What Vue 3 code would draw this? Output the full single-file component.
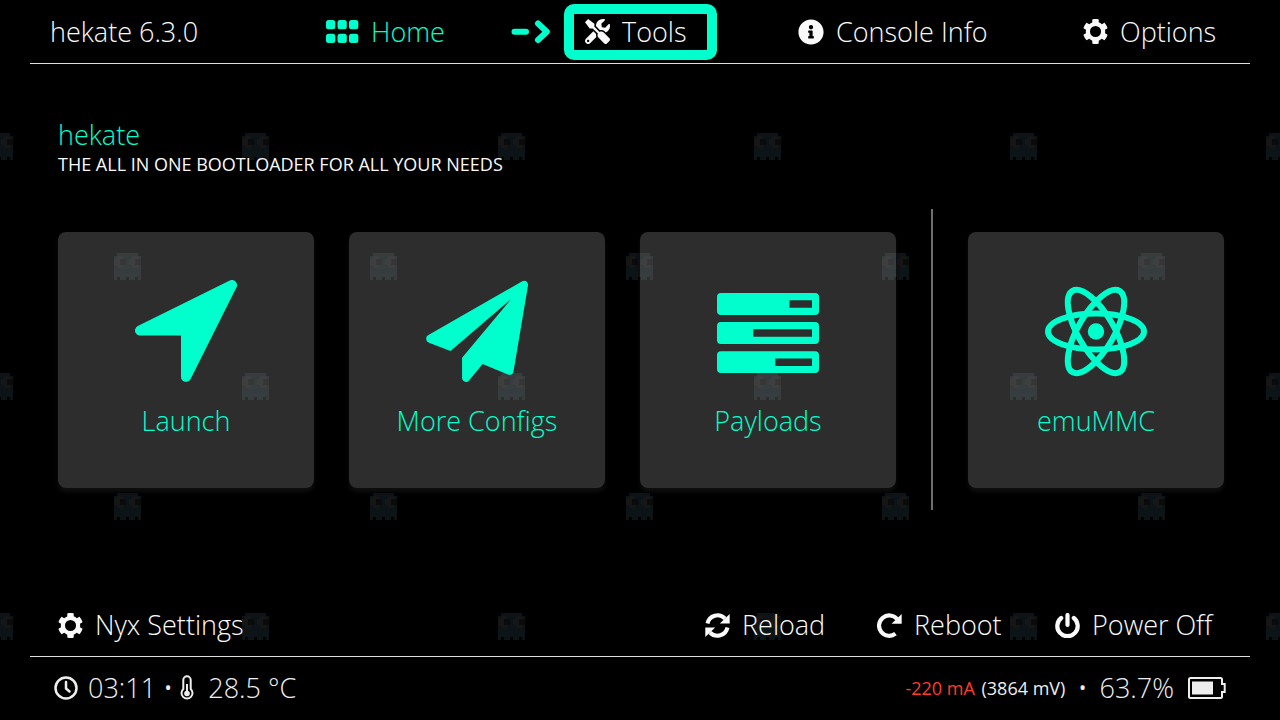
<script setup>
const gear =
  'M487.4 315.7l-42.6-24.6c4.3-23.2 4.3-47 0-70.2l42.6-24.6c4.9-2.8 7.1-8.6 5.5-14-11.1-35.6-30-67.8-54.7-94.6-3.8-4.1-10-5.1-14.8-2.3L380.8 110c-17.9-15.4-38.5-27.3-60.8-35.1V25.8c0-5.6-3.9-10.5-9.4-11.7-36.7-8.2-74.3-7.8-109.2 0-5.5 1.2-9.4 6.1-9.4 11.7V75c-22.2 7.9-42.8 19.8-60.8 35.1L88.7 85.5c-4.9-2.8-11-1.9-14.8 2.3-24.7 26.7-43.6 58.9-54.7 94.6-1.7 5.4.6 11.2 5.5 14L67.3 221c-4.3 23.2-4.3 47 0 70.2l-42.6 24.6c-4.9 2.8-7.1 8.6-5.5 14 11.1 35.6 30 67.8 54.7 94.6 3.8 4.1 10 5.1 14.8 2.3l42.6-24.6c17.9 15.4 38.5 27.3 60.8 35.1v49.2c0 5.6 3.9 10.5 9.4 11.7 36.7 8.2 74.3 7.8 109.2 0 5.5-1.2 9.4-6.1 9.4-11.7v-49.2c22.2-7.9 42.8-19.8 60.8-35.1l42.6 24.6c4.9 2.8 11 1.9 14.8-2.3 24.7-26.7 43.6-58.9 54.7-94.6 1.5-5.5-.7-11.3-5.6-14.1zM256 146a110 110 0 1 0 0 220 110 110 0 1 0 0-220z'

const ghostBody =
  'M3 0h21v3h3v24h-3v-3h-3v3h-6v-3h-3v3h-6v-3h-3v3h-3v-24h3z'
const ghostEyes = 'M3 3h6v3h3v6h-3v3h-6v-3h-3v-6h3zM18 3h6v3h3v6h-3v3h-6v-3h-3v-6h3z'
const ghostPupils = 'M6 6h6v6h-6zM21 6h6v6h-6z'
</script>

<template>
  <div class="screen">
    <svg class="backdrop" aria-hidden="true">
      <defs>
        <g id="ghost">
          <path :d="ghostBody" fill="#0d1417" />
          <path :d="ghostEyes" fill="#161616" />
          <path :d="ghostPupils" fill="#0b0b0c" />
        </g>
        <pattern id="ghosts" x="114" y="133" width="256" height="240" patternUnits="userSpaceOnUse">
          <use href="#ghost" x="128" y="0" />
          <use href="#ghost" x="0" y="120" />
        </pattern>
      </defs>
      <rect width="100%" height="100%" fill="url(#ghosts)" />
    </svg>

    <header class="topbar">
      <span class="brand">hekate 6.3.0</span>
      <button type="button" class="item accent">
        <svg width="33" height="25" viewBox="0 0 33 25" fill="currentColor" aria-hidden="true">
          <rect x="0" y="1" width="9.3" height="9.3" rx="2.5" /><rect x="11.5" y="1" width="9.3" height="9.3" rx="2.5" /><rect x="23" y="1" width="9.3" height="9.3" rx="2.5" />
          <rect x="0" y="14.8" width="9.3" height="9.3" rx="2.5" /><rect x="11.5" y="14.8" width="9.3" height="9.3" rx="2.5" /><rect x="23" y="14.8" width="9.3" height="9.3" rx="2.5" />
        </svg>
        Home
      </button>
      <div class="pointed">
        <svg class="accent" width="40" height="25" viewBox="0 0 40 25" fill="none" stroke="currentColor" stroke-width="6" stroke-linecap="round" stroke-linejoin="round" aria-hidden="true">
          <path d="M3.5 12.7H15" />
          <path d="M27 4.5L35.8 12.7 27 21" />
        </svg>
        <button type="button" class="item boxed">
          <svg width="25" height="25" viewBox="0 0 512 512" fill="currentColor" aria-hidden="true">
            <path d="M501.1 395.7L384 278.6c-23.1-23.1-57.6-27.6-85.4-13.9L192 158.1V96L64 0 0 64l96 128h62.1l106.6 106.6c-13.6 27.8-9.2 62.3 13.9 85.4l117.1 117.1c14.6 14.6 38.2 14.6 52.7 0l52.7-52.7c14.5-14.6 14.5-38.2 0-52.7zM331.7 225c28.3 0 54.9 11 74.9 31l19.4 19.4c15.8-6.9 30.8-16.5 43.8-29.5 37.1-37.1 49.7-89.3 37.9-136.7-2.2-9-13.5-12.1-20.1-5.5l-74.4 74.4-67.9-11.3L334 98.9l74.4-74.4c6.6-6.6 3.4-17.9-5.7-20.2-47.4-11.7-99.6.9-136.6 37.9-28.5 28.5-41.9 66.1-41.2 103.6l82.1 82.1c8.1-1.9 16.5-2.9 24.7-2.9zm-103.9 82l-56.7-56.7L18.7 402.8c-25 25-25 65.5 0 90.5s65.5 25 90.5 0l123.6-123.6c-7.6-19.9-9.9-41.6-5-62.7zM64 472c-13.2 0-24-10.8-24-24 0-13.3 10.7-24 24-24s24 10.7 24 24c0 13.2-10.7 24-24 24z" />
          </svg>
          Tools
        </button>
      </div>
      <button type="button" class="item">
        <svg width="26" height="26" viewBox="0 0 512 512" fill="currentColor" aria-hidden="true">
          <path d="M256 8C119.043 8 8 119.083 8 256c0 136.997 111.043 248 248 248s248-111.003 248-248C504 119.083 392.957 8 256 8zm0 110c23.196 0 42 18.804 42 42s-18.804 42-42 42-42-18.804-42-42 18.804-42 42-42zm56 254c0 6.627-5.373 12-12 12h-88c-6.627 0-12-5.373-12-12v-24c0-6.627 5.373-12 12-12h12v-64h-12c-6.627 0-12-5.373-12-12v-24c0-6.627 5.373-12 12-12h64c6.627 0 12 5.373 12 12v100h12c6.627 0 12 5.373 12 12v24z" />
        </svg>
        Console Info
      </button>
      <button type="button" class="item">
        <svg width="25" height="25" viewBox="8 8 496 496" fill="currentColor" fill-rule="evenodd" aria-hidden="true"><path :d="gear" /></svg>
        Options
      </button>
    </header>

    <main>
      <h1>hekate</h1>
      <p class="subtitle">THE ALL IN ONE BOOTLOADER FOR ALL YOUR NEEDS</p>

      <div class="cards">
        <button type="button" class="card">
          <svg width="102" height="102" viewBox="0 0 102 102" aria-hidden="true">
            <path d="M97 5L5 50.5H51V97z" fill="currentColor" stroke="currentColor" stroke-width="10" stroke-linejoin="round" />
          </svg>
          Launch
        </button>
        <button type="button" class="card">
          <svg width="102" height="102" viewBox="0 0 512 512" fill="currentColor" aria-hidden="true">
            <path d="M481 8L12 276c-16 9-14 32 3 39L123 356 428 95 181 390V491c0 20 22 28 35 13L284 422 411 474c14 6 26-2 28-14L512 27C514 8 497-2 481 8z" />
          </svg>
          More Configs
        </button>
        <button type="button" class="card">
          <svg width="102" height="102" viewBox="0 0 102 102" fill="currentColor" fill-rule="evenodd" aria-hidden="true">
            <path d="M4 13H98a4 4 0 0 1 4 4V31a4 4 0 0 1-4 4H4a4 4 0 0 1-4-4V17a4 4 0 0 1 4-4zM72.5 20.3V27.7H95V20.3z" />
            <path d="M4 42H98a4 4 0 0 1 4 4V60a4 4 0 0 1-4 4H4a4 4 0 0 1-4-4V46a4 4 0 0 1 4-4zM36.3 49.3V56.7H95V49.3z" />
            <path d="M4 71.3H98a4 4 0 0 1 4 4V89a4 4 0 0 1-4 4H4a4 4 0 0 1-4-4V75.3a4 4 0 0 1 4-4zM58.3 78.5V86H95V78.5z" />
          </svg>
          Payloads
        </button>
        <div class="divider"></div>
        <button type="button" class="card">
          <svg width="102" height="102" viewBox="0 0 102 102" fill="none" stroke="currentColor" stroke-width="6" aria-hidden="true">
            <ellipse cx="51" cy="51.5" rx="48" ry="18" />
            <ellipse cx="51" cy="51.5" rx="47" ry="18" transform="rotate(60 51 51.5)" />
            <ellipse cx="51" cy="51.5" rx="47" ry="18" transform="rotate(120 51 51.5)" />
            <circle cx="51" cy="51.5" r="8.2" fill="currentColor" stroke="none" />
          </svg>
          emuMMC
        </button>
      </div>
    </main>

    <nav class="actions">
      <button type="button" class="item">
        <svg width="25" height="25" viewBox="8 8 496 496" fill="currentColor" fill-rule="evenodd" aria-hidden="true"><path :d="gear" /></svg>
        Nyx Settings
      </button>
      <button type="button" class="item">
        <svg width="25" height="25" viewBox="0 0 25 25" aria-hidden="true">
          <g fill="none" stroke="currentColor" stroke-width="4">
            <path d="M2.5 10.5A10.3 10.3 0 0 1 20 5.5" />
            <path d="M22.5 14.5A10.3 10.3 0 0 1 5 19.5" />
          </g>
          <path d="M24.7 1V10.6H14.8zM.3 24V14.4H10.2z" fill="currentColor" />
        </svg>
        Reload
      </button>
      <button type="button" class="item">
        <svg width="25" height="25" viewBox="0 0 25 25" aria-hidden="true">
          <path d="M20 6A10.2 10.2 0 1 0 18.5 20.7" fill="none" stroke="currentColor" stroke-width="4.2" />
          <path d="M24.7 1V10.8H14.5z" fill="currentColor" />
        </svg>
        Reboot
      </button>
      <button type="button" class="item">
        <svg width="25" height="25" viewBox="0 0 25 25" fill="none" stroke="currentColor" stroke-width="4.2" stroke-linecap="round" aria-hidden="true">
          <path d="M6.2 5A10.2 10.2 0 1 0 18.8 5" />
          <path d="M12.5 2V12" />
        </svg>
        Power Off
      </button>
    </nav>

    <footer class="status">
      <svg width="24" height="24" viewBox="0 0 24 24" fill="none" stroke="currentColor" stroke-width="2.5" stroke-linecap="round" stroke-linejoin="round" aria-hidden="true">
        <circle cx="12" cy="12" r="10.5" />
        <path d="M12 6V12.5L15.5 15.5" />
      </svg>
      <span class="time">03:11</span>
      <span class="dot">•</span>
      <svg width="14" height="25" viewBox="0 0 14 25" aria-hidden="true">
        <path d="M3.3 5A3.7 3.7 0 0 1 10.7 5V14A5.5 5.5 0 1 1 3.3 14z" fill="none" stroke="currentColor" stroke-width="2" />
        <path d="M7 9V18" stroke="currentColor" stroke-width="2" />
        <circle cx="7" cy="18.5" r="2.8" fill="currentColor" />
      </svg>
      <span class="temp">28.5 °C</span>
      <span class="power"><span class="drain">-220 mA</span> (3864 mV)</span>
      <span class="dot wide">•</span>
      <span class="charge">63.7%</span>
      <svg width="38" height="22" viewBox="0 0 38 22" aria-hidden="true">
        <path d="M2.5 1H32.5Q34 1 34 2.5V7H36.7V15H34V19.5Q34 21 32.5 21H2.5Q1 21 1 19.5V2.5Q1 1 2.5 1z" fill="none" stroke="currentColor" stroke-width="2" />
        <rect x="4" y="4.5" width="21" height="13" fill="currentColor" />
      </svg>
    </footer>
  </div>
</template>

<style>
body {
  background: #000;
}
</style>

<style scoped>
.screen {
  position: relative;
  isolation: isolate;
  display: flex;
  flex-direction: column;
  min-height: 100vh;
  background: #000;
  color: #fafafa;
  font-family: 'Open Sans', 'Noto Sans', sans-serif;
  font-size: 27px;
  font-weight: 300;
  line-height: 36px;
}

.backdrop {
  position: absolute;
  inset: 0;
  z-index: -1;
  width: 100%;
  height: 100%;
}

svg {
  flex: none;
}

button {
  padding: 0;
  border: 0;
  background: none;
  color: inherit;
  font: inherit;
  white-space: nowrap;
  cursor: pointer;
}

.item {
  display: flex;
  align-items: center;
  gap: 12px;
}

.accent {
  color: #00ffcc;
}

.topbar {
  display: grid;
  grid-template-columns: 276fr 185fr 287fr 285fr 167fr;
  align-items: center;
  height: 63px;
  margin: 0 30px;
  padding-left: 20px;
  border-bottom: 1px solid #dedede;
  background: #000;
}

.pointed {
  display: flex;
  align-items: center;
  gap: 13px;
}

.boxed {
  min-width: 153px;
  padding: 0 11px;
  border: 10px solid #00ffcc;
  border-radius: 10px;
}

main {
  flex: 1;
  padding: 53px 56px 0 58px;
}

h1,
p {
  margin: 0;
}

h1 {
  color: #00ffcc;
  font-size: 27px;
  font-weight: 300;
}

.subtitle {
  font-size: 18px;
  font-weight: 400;
  line-height: 22px;
}

.cards {
  display: grid;
  grid-template-columns: 1fr 1fr 1fr 2px 1fr;
  gap: 35px;
  align-items: center;
  margin-top: 34px;
}

.divider {
  align-self: stretch;
  background: #6e6e6e;
}

.card {
  display: flex;
  flex-direction: column;
  align-items: center;
  gap: 21px;
  aspect-ratio: 1;
  margin: 23px 0 22px;
  padding-top: 48px;
  border-radius: 8px;
  background: rgba(255, 255, 255, 0.176);
  box-shadow: 0 4px 4px #0e0e0e;
  color: #00ffcc;
}

.actions {
  display: grid;
  grid-template-columns: 647fr 172fr 178fr 168fr;
  align-items: center;
  height: 62px;
  margin: 0 30px;
  padding: 2px 27px 0 28px;
  border-bottom: 1px solid #dedede;
}

.status {
  display: flex;
  align-items: center;
  height: 61px;
  padding: 0 54px 2px;
  background: #000;
  color: #eee;
}

.time {
  margin-left: 10px;
}

.dot {
  margin: 0 7px;
}

.wide {
  margin: 0 12px;
}

.temp {
  margin: 0 auto 0 14px;
}

.power {
  font-size: 18px;
  font-weight: 400;
}

.drain {
  margin-right: 2px;
  color: #ff3b2a;
}

.charge {
  margin-right: 14px;
}
</style>
